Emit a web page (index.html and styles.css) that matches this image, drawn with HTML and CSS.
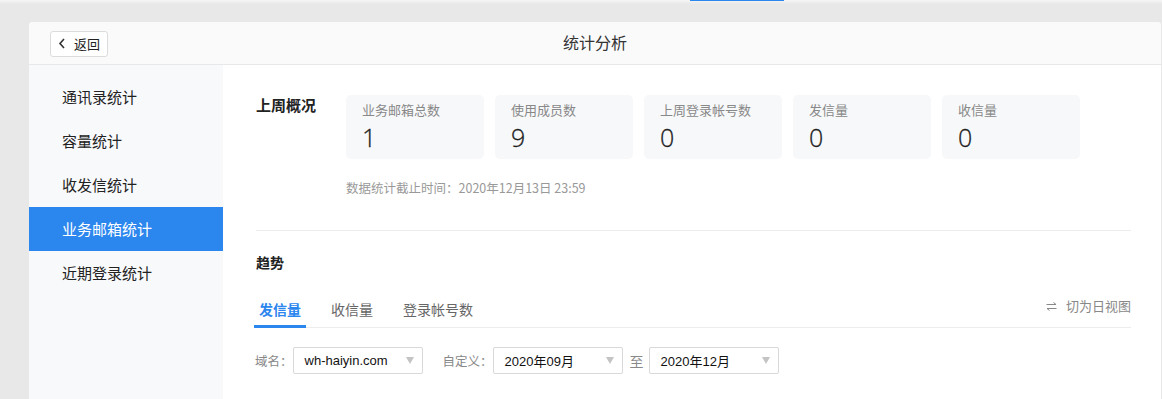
FILE: index.html
```html
<!DOCTYPE html>
<html lang="zh-CN">
<head>
<meta charset="utf-8">
<title>统计分析</title>
<link rel="stylesheet" href="styles.css">
</head>
<body>
<div class="topbar"><span class="topbar-mark"></span></div>
<div class="page">
  <div class="panel">
    <header class="panel-head">
      <button class="back-btn">
        <svg class="back-icon" width="8" height="11" viewBox="0 0 8 11"><path d="M6 1 L2 5.5 L6 10" fill="none" stroke="#333" stroke-width="1.6"/></svg>
        <span>返回</span>
      </button>
      <h1 class="panel-title">统计分析</h1>
    </header>
    <div class="panel-body">
      <nav class="side">
        <a class="side-item">通讯录统计</a>
        <a class="side-item">容量统计</a>
        <a class="side-item">收发信统计</a>
        <a class="side-item active">业务邮箱统计</a>
        <a class="side-item">近期登录统计</a>
      </nav>
      <main class="main">
        <section class="overview">
          <h2 class="sec-title">上周概况</h2>
          <div class="overview-body">
            <div class="stats">
              <div class="stat"><div class="stat-label">业务邮箱总数</div><div class="stat-value">1</div></div>
              <div class="stat"><div class="stat-label">使用成员数</div><div class="stat-value">9</div></div>
              <div class="stat"><div class="stat-label">上周登录帐号数</div><div class="stat-value">0</div></div>
              <div class="stat"><div class="stat-label">发信量</div><div class="stat-value">0</div></div>
              <div class="stat"><div class="stat-label">收信量</div><div class="stat-value">0</div></div>
            </div>
            <p class="note">数据统计截止时间：2020年12月13日 23:59</p>
          </div>
        </section>
        <section class="trend">
          <h2 class="sec-title">趋势</h2>
          <div class="tabbar">
            <div class="tabs">
              <span class="tab active">发信量</span>
              <span class="tab">收信量</span>
              <span class="tab">登录帐号数</span>
            </div>
            <span class="switch">
              <svg width="11" height="9" viewBox="0 0 11 9"><path d="M0.5 2.5 H10 M7.5 0.5 L10 2.5" fill="none" stroke="#888" stroke-width="1"/><path d="M10.5 6.5 H1 M3.5 8.5 L1 6.5" fill="none" stroke="#888" stroke-width="1"/></svg>
              切为日视图
            </span>
          </div>
          <div class="filters">
            <span class="f-label">域名：</span>
            <div class="select"><span>wh-haiyin.com</span><i class="caret"></i></div>
            <span class="f-label custom">自定义：</span>
            <div class="select"><span>2020年09月</span><i class="caret"></i></div>
            <span class="f-to">至</span>
            <div class="select"><span>2020年12月</span><i class="caret"></i></div>
          </div>
        </section>
      </main>
    </div>
  </div>
</div>
</body>
</html>
```

FILE: styles.css
```css
* { box-sizing: border-box; }
html, body { margin: 0; padding: 0; }
body {
  width: 1162px;
  height: 399px;
  overflow: hidden;
  background: #e8e8e8;
  font-family: "Noto Sans CJK SC", "Liberation Sans", sans-serif;
  color: #222;
  position: relative;
}
.topbar {
  height: 4px;
  background: linear-gradient(#f6f6f6, #e8e8e8);
  position: relative;
}
.topbar-mark {
  position: absolute;
  left: 690px;
  top: 0;
  width: 94px;
  height: 1px;
  background: #2b86ee;
}
.page {
  padding: 18px 1px 0 29px;
}
.panel {
  background: #fff;
  border-radius: 4px 4px 0 0;
  height: 377px;
  display: flex;
  flex-direction: column;
  overflow: hidden;
}
.panel-head {
  height: 43px;
  background: #fafafa;
  border-bottom: 1px solid #e8e8e8;
  display: flex;
  align-items: center;
  position: relative;
  padding-left: 21px;
}
.back-btn {
  height: 26px;
  width: 58px;
  border: 1px solid #dcdcdc;
  border-radius: 3px;
  background: #fff;
  display: flex;
  align-items: center;
  gap: 8px;
  padding: 0 0 0 7px;
  font-family: "Noto Sans CJK SC", sans-serif;
  font-size: 13px;
  color: #222;
  margin-top: 1px;
}
.back-icon { display: block; }
.panel-title {
  position: absolute;
  left: 0;
  right: 0;
  top: 0;
  margin: 0;
  text-align: center;
  line-height: 41px;
  font-size: 16px;
  font-weight: 400;
  color: #333;
  pointer-events: none;
}
.panel-body {
  flex: 1;
  display: flex;
}
.side {
  width: 194px;
  background: #f8f9fb;
  padding-top: 10px;
  display: flex;
  flex-direction: column;
}
.side-item {
  height: 44px;
  line-height: 43px;
  padding-left: 33px;
  font-size: 15px;
  color: #222;
}
.side-item.active {
  background: #2b86ee;
  color: #fff;
}
.main {
  flex: 1;
  padding: 30px 30px 0 33px;
}
.overview {
  display: flex;
  border-bottom: 1px solid #ececec;
  padding-bottom: 33px;
}
.sec-title {
  margin: 0;
  font-size: 14px;
  font-weight: 700;
  line-height: 22px;
  color: #222;
}
.overview .sec-title {
  width: 90px;
  font-size: 15px;
  line-height: 20px;
}
.stats {
  display: flex;
  gap: 11px;
}
.stat {
  width: 138px;
  height: 64px;
  background: #f7f8fa;
  border-radius: 5px;
  padding: 6px 0 0 16px;
}
.stat-label {
  font-size: 13px;
  line-height: 18px;
  color: #888;
}
.stat-value {
  margin-top: 2px;
  font-family: "Open Sans", "Liberation Sans", sans-serif;
  font-size: 25px;
  font-weight: 300;
  line-height: 32px;
  color: #1e1e1e;
  -webkit-text-stroke: 0.3px #1e1e1e;
}
.note {
  margin: 20px 0 0;
  font-size: 12.5px;
  line-height: 18px;
  color: #999;
}
.trend .sec-title {
  margin-top: 21px;
  line-height: 20px;
}
.tabbar {
  margin-top: 24px;
  margin-left: -2px;
  display: flex;
  justify-content: space-between;
  align-items: flex-end;
  border-bottom: 1px solid #ececec;
}
.tabs {
  display: flex;
  gap: 20px;
}
.tab {
  font-size: 14px;
  line-height: 20px;
  padding: 0 5px 6px;
  border-bottom: 3px solid transparent;
  margin-bottom: -1px;
  color: #666;
}
.tab.active {
  color: #2b86ee;
  font-weight: 700;
  border-bottom-color: #2b86ee;
}
.switch {
  font-size: 13px;
  line-height: 20px;
  color: #888;
  padding-bottom: 11px;
  display: flex;
  align-items: center;
  gap: 9px;
}
.filters {
  margin-top: 19px;
  margin-left: -1px;
  display: flex;
  align-items: center;
}
.f-label {
  font-size: 12.5px;
  color: #888;
}
.f-label.custom { margin-left: 20px; }
.f-to {
  font-size: 14px;
  color: #888;
  margin: 0 5px 0 7px;
}
.select {
  width: 130px;
  height: 27px;
  border: 1px solid #d9d9d9;
  border-radius: 2px;
  background: #fff;
  display: flex;
  align-items: center;
  justify-content: space-between;
  padding: 0 8px 0 11px;
  font-family: "Liberation Sans", "Noto Sans CJK SC", sans-serif;
  font-size: 13px;
  color: #111;
}
.caret {
  width: 0;
  height: 0;
  border-left: 4px solid transparent;
  border-right: 4px solid transparent;
  border-top: 7px solid #c4c4c4;
}
```
